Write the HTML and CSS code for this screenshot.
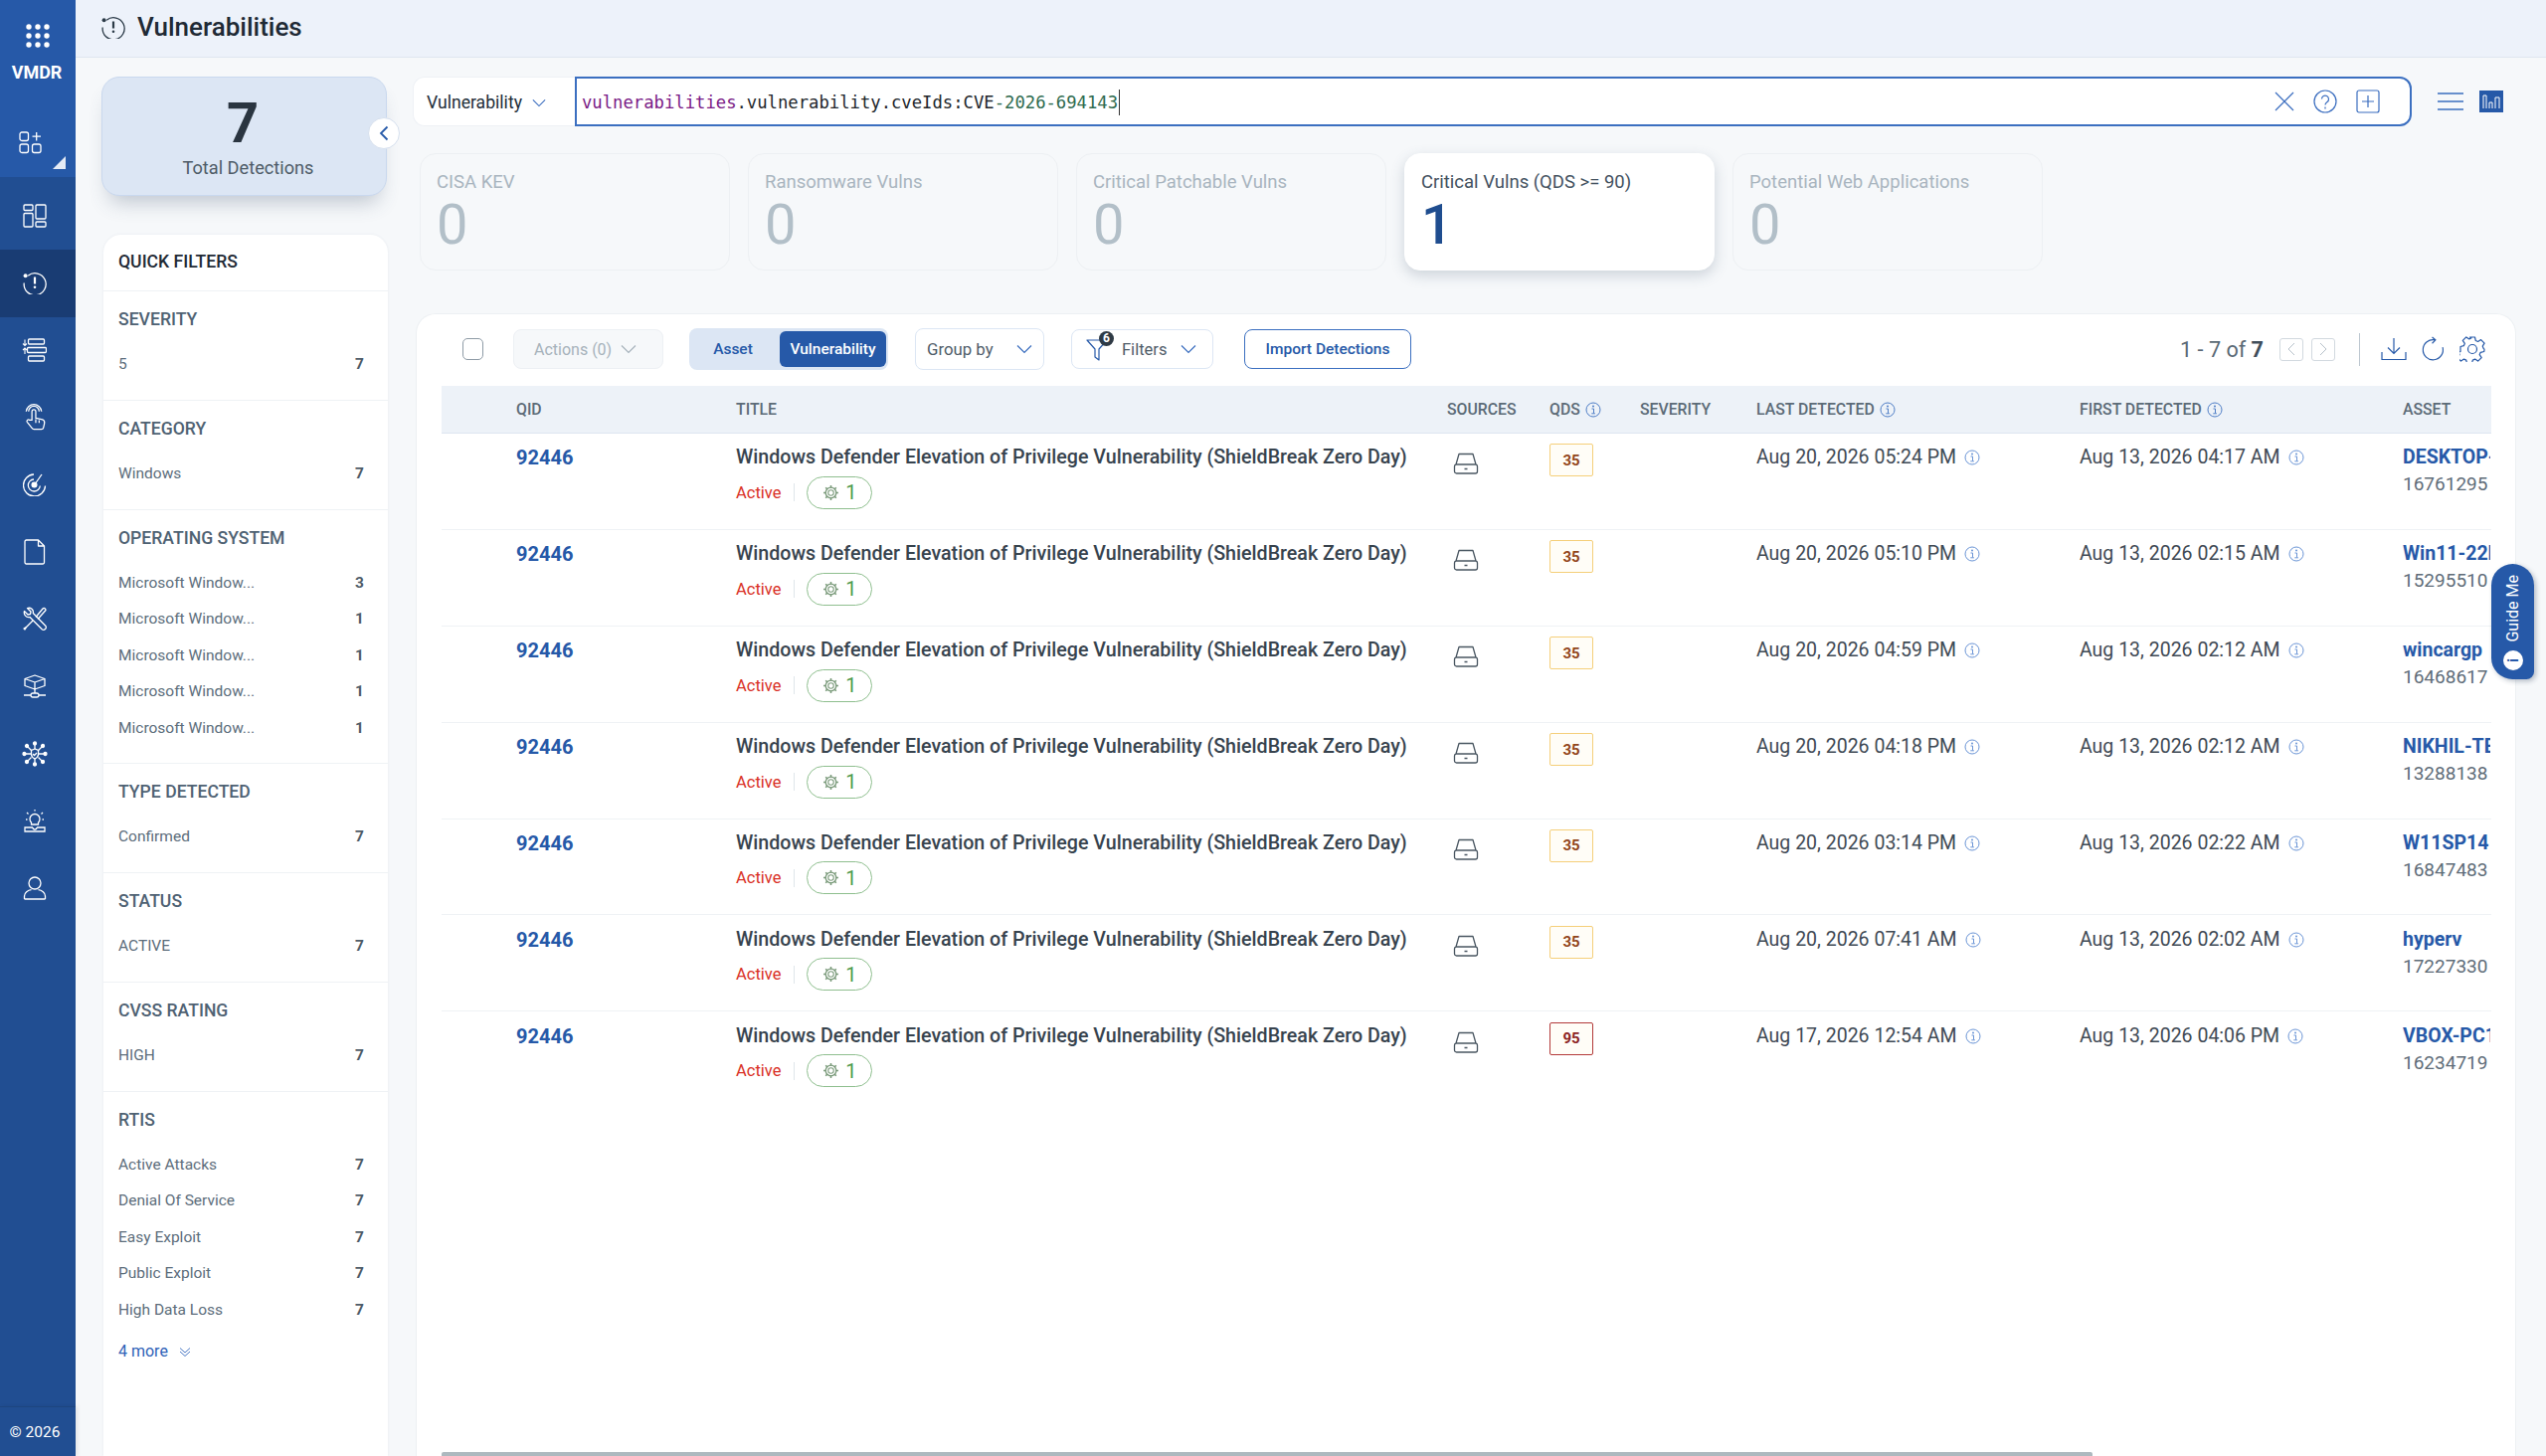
FILE: index.html
```html
<!DOCTYPE html>
<html lang="en">
<head>
<meta charset="utf-8">
<title>Vulnerabilities</title>
<link rel="stylesheet" href="styles.css">
</head>
<body>
<svg class="defs" width="0" height="0" aria-hidden="true">
  <symbol id="i-vuln" viewBox="0 0 24 24"><path d="M5.2 5.2A11 11 0 1 1 1.2 12.500" fill="none" stroke="currentColor" stroke-width="1.300"/><circle cx="2.600" cy="5.200" r="2" fill="currentColor"/><path d="M12 6.500v7" stroke="currentColor" stroke-width="2.200"/><circle cx="12" cy="16.800" r="1.300" fill="currentColor"/></symbol>
  <symbol id="i-info" viewBox="0 0 16 16"><circle cx="8" cy="8" r="7" fill="none" stroke="currentColor"/><circle cx="8" cy="4.600" r="1" fill="currentColor"/><path d="M6.500 7h2v4.500M6.300 11.800h3.600" fill="none" stroke="currentColor"/></symbol>
  <symbol id="i-drive" viewBox="0 0 26 22"><path d="M6 1.500h14l3 10.500H3zM3 12h20a2 2 0 0 1 1.500 2v5a2 2 0 0 1-2 2H3.500a2 2 0 0 1-2-2v-5a2 2 0 0 1 1.500-2z" fill="none" stroke="currentColor" stroke-width="1.300" stroke-linejoin="round"/><path d="M11.500 16.500h3" stroke="currentColor" stroke-width="1.500"/></symbol>
  <symbol id="i-gear" viewBox="0 0 16 16"><circle cx="8" cy="8" r="2.600" fill="none" stroke="currentColor"/><circle cx="8" cy="8" r="5" fill="none" stroke="currentColor" stroke-width="1.200"/><path d="M8 1v2.500M8 12.500V15M1 8h2.500M12.500 8H15M3 3l1.800 1.800M11.200 11.200 13 13M3 13l1.800-1.800M11.200 4.800 13 3" stroke="currentColor" stroke-width="1.400"/></symbol>
  <symbol id="i-chev" viewBox="0 0 16 10"><path d="M1 1.500 8 8.500l7-7" fill="none" stroke="currentColor" stroke-width="1.200"/></symbol>
</svg>

<div class="app">
  <aside class="rail">
    <div class="rail-brand">
      <svg class="rail-dots" viewBox="0 0 24 24" width="24" height="24" fill="#fff"><circle cx="3" cy="3" r="2.700"/><circle cx="12" cy="3" r="2.700"/><circle cx="21" cy="3" r="2.700"/><circle cx="3" cy="12" r="2.700"/><circle cx="12" cy="12" r="2.700"/><circle cx="21" cy="12" r="2.700"/><circle cx="3" cy="21" r="2.700"/><circle cx="12" cy="21" r="2.700"/><circle cx="21" cy="21" r="2.700"/></svg>
      <div class="rail-name">VMDR</div>
    </div>
    <nav class="rail-nav">
      <div class="rail-item rail-first"><svg viewBox="0 0 24 24" width="24" height="24" fill="none" stroke="currentColor" stroke-width="1.300"><rect x="1" y="2" width="8.500" height="8.500" rx="2"/><rect x="1" y="14" width="8.500" height="8.500" rx="2"/><rect x="13.500" y="14" width="8.500" height="8.500" rx="2"/><path d="M17.700 2v8.500M13.500 6.200H22"/></svg></div>
      <div class="rail-item rail-second"><svg viewBox="0 0 24 24" width="24" height="24" fill="none" stroke="currentColor" stroke-width="1.300"><rect x="1" y="1" width="9" height="5.500" rx="1"/><rect x="1" y="9.500" width="9" height="13.500" rx="1"/><rect x="13" y="1" width="10" height="14" rx="1"/><rect x="13" y="18" width="10" height="5" rx="1"/></svg></div>
      <div class="rail-item rail-active"><svg width="24" height="24"><use href="#i-vuln"/></svg></div>
      <div class="rail-item"><svg viewBox="0 0 24 24" width="25" height="24" fill="none" stroke="currentColor" stroke-width="1.300"><rect x="6" y="1" width="16" height="5" rx="1"/><rect x="5" y="9.500" width="19" height="5" rx="1"/><rect x="6" y="18" width="16" height="5" rx="1"/><path d="M2.500 1.500v6M.5 5.500l2 2 2-2M2.500 16v-5.500M.5 12l2-2 2 2" stroke-width="1.100"/></svg></div>
      <div class="rail-item"><svg viewBox="0 0 24 28" width="24" height="27" fill="none" stroke="currentColor" stroke-width="1.300" stroke-linejoin="round"><path d="M9 17V8a2 2 0 0 1 4 0v7l7 1.500c1.500.5 2.500 1.500 2 4l-1 4.500c-.3 1-1 1.500-2 1.500H11c-1 0-1.500-.5-2-1.200L4 19c-1-1.500.8-3.200 2.500-2z"/><path d="M5.500 8a5.500 5.500 0 0 1 11 0M3 8a8 8 0 0 1 8-7.300A8 8 0 0 1 19 8"/><path d="M13 16v4M16.500 17v3"/></svg></div>
      <div class="rail-item"><svg viewBox="0 0 24 24" width="24" height="24" fill="none" stroke="currentColor" stroke-width="1.300"><path d="M11 2a11 11 0 1 0 11.500 11.500"/><path d="M11 7a6 6 0 1 0 6.300 6.500"/><circle cx="11.500" cy="12.500" r="2.400" fill="currentColor"/><path d="M12 12 19 2"/></svg></div>
      <div class="rail-item"><svg viewBox="0 0 22 26" width="22" height="26" fill="none" stroke="currentColor" stroke-width="1.300" stroke-linejoin="round"><path d="M2.500 1h12l6 6v16.500a1.500 1.500 0 0 1-1.500 1.500H2.500A1.500 1.500 0 0 1 1 23.500v-21A1.500 1.500 0 0 1 2.500 1zM14.500 1v6h6"/></svg></div>
      <div class="rail-item"><svg viewBox="0 0 24 24" width="24" height="24" fill="none" stroke="currentColor" stroke-width="1.300" stroke-linejoin="round"><path d="M1.500 4.500 5 8l2.500-.5L8 5 4.500 1.500C8 .5 11 3 10.300 6.500L23 19.500c.5 1 .5 2-.5 3s-2 1-3 .5L7 10.500C3.500 11.500.5 8 1.500 4.500z"/><path d="M13 10.500 20 2c1-1 3-.5 3 1.500L15 12.500M10 14l-6 6-2 3-1-1 3-2"/></svg></div>
      <div class="rail-item"><svg viewBox="0 0 24 24" width="24" height="24" fill="none" stroke="currentColor" stroke-width="1.300" stroke-linejoin="round"><path d="M12 1 22 4.500v7L12 15 2 11.500v-7zM2 4.500 12 8l10-3.500M12 8v7"/><path d="M12 15v4M1 21h7M16 21h7"/><rect x="8" y="19" width="8" height="4" rx="2"/></svg></div>
      <div class="rail-item"><svg viewBox="0 0 26 26" width="26" height="26" fill="none" stroke="currentColor" stroke-width="1.300"><path d="M13 8 9.500 9.500v4c0 2 1.500 3.500 3.500 4.500 2-1 3.500-2.500 3.500-4.500v-4z"/><path d="m11 13 1.500 1.500 2.500-2.500"/><path d="M13 3v5M13 18v5M3 13h6M17 13h6M5.500 5.500 9.500 9.500M16.500 16.500l4 4M5.500 20.500l4-4M16.500 9.500l4-4"/><g fill="currentColor"><circle cx="13" cy="2.500" r="1.500"/><circle cx="13" cy="23.500" r="1.500"/><circle cx="2.500" cy="13" r="1.500"/><circle cx="23.500" cy="13" r="1.500"/><circle cx="5" cy="5" r="1.500"/><circle cx="21" cy="21" r="1.500"/><circle cx="5" cy="21" r="1.500"/><circle cx="21" cy="5" r="1.500"/></g></svg></div>
      <div class="rail-item"><svg viewBox="0 0 24 24" width="24" height="24" fill="none" stroke="currentColor" stroke-width="1.300"><path d="M8.500 14c-1-1-1.500-2-1.500-3.500a5 5 0 0 1 10 0c0 1.500-.5 2.500-1.500 3.500v2h-7z"/><path d="M12 1v1.500M4 4l1.500 1.500M20 4l-1.500 1.500M3 11h1.500M19.500 11H21"/><path d="M10 19H2v4h20v-4h-8M10 19a2 2 0 0 0 4 0"/></svg></div>
      <div class="rail-item"><svg viewBox="0 0 24 24" width="24" height="24" fill="none" stroke="currentColor" stroke-width="1.300"><circle cx="12" cy="7" r="6"/><path d="M1.500 23v-3c0-3 3.500-6 7-6.300M22.500 23v-3c0-3-3.500-6-7-6.300M1.500 23h21"/></svg></div>
    </nav>
    <div class="rail-foot">© 2026</div>
  </aside>

  <div class="page">
    <header class="topbar">
      <svg class="topbar-icon" width="24" height="24"><use href="#i-vuln"/></svg>
      <h1 class="topbar-title">Vulnerabilities</h1>
    </header>

    <div class="content">
      <aside class="left">
        <div class="total">
          <div class="total-num">7</div>
          <div class="total-label">Total Detections</div>
          <button class="collapse" aria-label="Collapse"><svg viewBox="0 0 10 16" width="10" height="16"><path d="M8.500 1.500 2 8l6.500 6.500" fill="none" stroke="#2659a8" stroke-width="1.800"/></svg></button>
        </div>

        <div class="qf">
          <div class="qf-title">QUICK FILTERS</div>
          <section class="qf-sec">
            <h2 class="qf-head">SEVERITY</h2>
            <div class="qf-row"><span>5</span><b>7</b></div>
          </section>
          <section class="qf-sec">
            <h2 class="qf-head">CATEGORY</h2>
            <div class="qf-row"><span>Windows</span><b>7</b></div>
          </section>
          <section class="qf-sec">
            <h2 class="qf-head">OPERATING SYSTEM</h2>
            <div class="qf-row"><span>Microsoft Window...</span><b>3</b></div>
            <div class="qf-row"><span>Microsoft Window...</span><b>1</b></div>
            <div class="qf-row"><span>Microsoft Window...</span><b>1</b></div>
            <div class="qf-row"><span>Microsoft Window...</span><b>1</b></div>
            <div class="qf-row"><span>Microsoft Window...</span><b>1</b></div>
          </section>
          <section class="qf-sec">
            <h2 class="qf-head">TYPE DETECTED</h2>
            <div class="qf-row"><span>Confirmed</span><b>7</b></div>
          </section>
          <section class="qf-sec">
            <h2 class="qf-head">STATUS</h2>
            <div class="qf-row"><span>ACTIVE</span><b>7</b></div>
          </section>
          <section class="qf-sec">
            <h2 class="qf-head">CVSS RATING</h2>
            <div class="qf-row"><span>HIGH</span><b>7</b></div>
          </section>
          <section class="qf-sec qf-last">
            <h2 class="qf-head">RTIS</h2>
            <div class="qf-row"><span>Active Attacks</span><b>7</b></div>
            <div class="qf-row"><span>Denial Of Service</span><b>7</b></div>
            <div class="qf-row"><span>Easy Exploit</span><b>7</b></div>
            <div class="qf-row"><span>Public Exploit</span><b>7</b></div>
            <div class="qf-row"><span>High Data Loss</span><b>7</b></div>
            <div class="qf-more">4 more <svg viewBox="0 0 12 12" width="12" height="12" fill="none" stroke="#4a78c4"><path d="M1 2.500 6 7l5-4.500M1 6l5 4.500L11 6"/></svg></div>
          </section>
        </div>
      </aside>

      <main class="right">
        <div class="searchrow">
          <div class="scope">Vulnerability <svg class="chev-s" width="14" height="9"><use href="#i-chev"/></svg></div>
          <div class="query">
            <div class="query-text"><span class="q-key">vulnerabilities</span>.vulnerability.cveIds:CVE<span class="q-num">-2026-694143</span><span class="caret"></span></div>
            <div class="query-tools">
              <svg viewBox="0 0 20 20" width="20" height="20" fill="none" stroke="currentColor" stroke-width="1.200"><path d="M1 1l18 18M19 1 1 19"/></svg>
              <svg viewBox="0 0 24 24" width="24" height="24" fill="none" stroke="currentColor" stroke-width="1.200"><circle cx="12" cy="12" r="11"/><path d="M8.500 9.500a3.500 3.500 0 1 1 5.500 3c-1.500 1-2 1.500-2 3M12 17.500v2"/></svg>
              <svg viewBox="0 0 24 24" width="24" height="24" fill="none" stroke="currentColor" stroke-width="1.200"><rect x="1" y="1" width="22" height="22" rx="2"/><path d="M12 6v12M6 12h12"/></svg>
            </div>
          </div>
          <svg class="view-list" viewBox="0 0 26 20" width="26" height="20" stroke="currentColor" stroke-width="1.300"><path d="M0 2h26M0 10h26M0 18h26"/></svg>
          <svg class="view-chart" viewBox="0 0 24 22" width="24" height="22"><rect width="24" height="22" fill="#2659a8"/><path d="M4 18V5h3v13M10 18v-6h3v6M16 18V7h4v11" fill="none" stroke="#fff" stroke-width="1"/></svg>
        </div>

        <div class="kpis">
          <div class="kpi"><div class="kpi-label">CISA KEV</div><div class="kpi-num">0</div></div>
          <div class="kpi"><div class="kpi-label">Ransomware Vulns</div><div class="kpi-num">0</div></div>
          <div class="kpi"><div class="kpi-label">Critical Patchable Vulns</div><div class="kpi-num">0</div></div>
          <div class="kpi kpi-on"><div class="kpi-label">Critical Vulns (QDS &gt;= 90)</div><div class="kpi-num">1</div></div>
          <div class="kpi"><div class="kpi-label">Potential Web Applications</div><div class="kpi-num">0</div></div>
        </div>

        <section class="card">
          <div class="tools">
            <span class="check"></span>
            <button class="btn btn-off">Actions (0) <svg width="16" height="10"><use href="#i-chev"/></svg></button>
            <div class="toggle"><span class="toggle-a">Asset</span><span class="toggle-b">Vulnerability</span></div>
            <button class="btn btn-group">Group by <svg class="blue" width="16" height="10"><use href="#i-chev"/></svg></button>
            <button class="btn btn-filter">
              <span class="funnel"><svg viewBox="0 0 22 24" width="22" height="24" fill="none" stroke="#2659a8" stroke-width="1.200" stroke-linejoin="round"><path d="M1 3h20l-8 9v11l-4-3v-8z"/></svg><i class="funnel-n">6</i></span>
              Filters <svg class="blue" width="16" height="10"><use href="#i-chev"/></svg>
            </button>
            <button class="btn btn-import">Import Detections</button>
            <div class="tools-end">
              <span class="pager">1 - 7 of <b>7</b></span>
              <span class="pg"><svg viewBox="0 0 8 14" width="8" height="14" fill="none" stroke="currentColor"><path d="M7 1 1 7l6 6"/></svg></span>
              <span class="pg"><svg viewBox="0 0 8 14" width="8" height="14" fill="none" stroke="currentColor"><path d="m1 1 6 6-6 6"/></svg></span>
              <span class="vsep"></span>
              <svg viewBox="0 0 26 24" width="26" height="24" fill="none" stroke="#2659a8" stroke-width="1.200"><path d="M13 1v15M7 10.500l6 6 6-6M1 15v7.500h24V15"/></svg>
              <svg viewBox="0 0 24 26" width="23" height="26" fill="none" stroke="#2659a8" stroke-width="1.200"><path d="M14 3.500a10.500 10.500 0 1 0 8 7.500M11 .5l3.500 3L11 7"/></svg>
              <svg viewBox="0 0 26 26" width="26" height="26" fill="none" stroke="#2659a8" stroke-width="1.200" stroke-linejoin="round"><circle cx="13" cy="13" r="4.500"/><path d="M10.500 1h5l.8 3.500 2.300 1 3-1.900 3.500 3.500-1.900 3 1 2.300L25 13.200v0l-.2 2.300-3.600.8-1 2.300 2 3-3.600 3.500-3-2-2.300 1-.8 3.400h-5l-.7-3.400-2.300-1-3 2-3.500-3.500 2-3-1-2.300L1 15.500v-5l3.300-.8 1-2.300-2-3 3.500-3.500 3 2 2-.9z"/></svg>
            </div>
          </div>

          <div class="table">
            <div class="grid thead">
              <span></span><span>QID</span><span>TITLE</span><span>SOURCES</span>
              <span>QDS <svg class="info-h" width="16" height="16"><use href="#i-info"/></svg></span>
              <span>SEVERITY</span>
              <span>LAST DETECTED <svg class="info-h" width="16" height="16"><use href="#i-info"/></svg></span>
              <span>FIRST DETECTED <svg class="info-h" width="16" height="16"><use href="#i-info"/></svg></span>
              <span>ASSET</span>
            </div>

            <div class="grid row">
              <span></span><a class="qid">92446</a>
              <div><div class="title">Windows Defender Elevation of Privilege Vulnerability (ShieldBreak Zero Day)</div><div class="meta"><span class="active">Active</span><span class="msep"></span><span class="pill"><svg width="17" height="17"><use href="#i-gear"/></svg>1</span></div></div>
              <svg class="drive" width="26" height="22"><use href="#i-drive"/></svg>
              <span class="qds">35</span><span></span>
              <span class="date">Aug 20, 2026 05:24 PM <svg class="info" width="16" height="16"><use href="#i-info"/></svg></span>
              <span class="date">Aug 13, 2026 04:17 AM <svg class="info" width="16" height="16"><use href="#i-info"/></svg></span>
              <div class="asset"><a>DESKTOP-4</a><span>16761295</span></div>
            </div>
            <div class="grid row">
              <span></span><a class="qid">92446</a>
              <div><div class="title">Windows Defender Elevation of Privilege Vulnerability (ShieldBreak Zero Day)</div><div class="meta"><span class="active">Active</span><span class="msep"></span><span class="pill"><svg width="17" height="17"><use href="#i-gear"/></svg>1</span></div></div>
              <svg class="drive" width="26" height="22"><use href="#i-drive"/></svg>
              <span class="qds">35</span><span></span>
              <span class="date">Aug 20, 2026 05:10 PM <svg class="info" width="16" height="16"><use href="#i-info"/></svg></span>
              <span class="date">Aug 13, 2026 02:15 AM <svg class="info" width="16" height="16"><use href="#i-info"/></svg></span>
              <div class="asset"><a>Win11-22H2</a><span>15295510</span></div>
            </div>
            <div class="grid row">
              <span></span><a class="qid">92446</a>
              <div><div class="title">Windows Defender Elevation of Privilege Vulnerability (ShieldBreak Zero Day)</div><div class="meta"><span class="active">Active</span><span class="msep"></span><span class="pill"><svg width="17" height="17"><use href="#i-gear"/></svg>1</span></div></div>
              <svg class="drive" width="26" height="22"><use href="#i-drive"/></svg>
              <span class="qds">35</span><span></span>
              <span class="date">Aug 20, 2026 04:59 PM <svg class="info" width="16" height="16"><use href="#i-info"/></svg></span>
              <span class="date">Aug 13, 2026 02:12 AM <svg class="info" width="16" height="16"><use href="#i-info"/></svg></span>
              <div class="asset"><a>wincargp</a><span>16468617</span></div>
            </div>
            <div class="grid row">
              <span></span><a class="qid">92446</a>
              <div><div class="title">Windows Defender Elevation of Privilege Vulnerability (ShieldBreak Zero Day)</div><div class="meta"><span class="active">Active</span><span class="msep"></span><span class="pill"><svg width="17" height="17"><use href="#i-gear"/></svg>1</span></div></div>
              <svg class="drive" width="26" height="22"><use href="#i-drive"/></svg>
              <span class="qds">35</span><span></span>
              <span class="date">Aug 20, 2026 04:18 PM <svg class="info" width="16" height="16"><use href="#i-info"/></svg></span>
              <span class="date">Aug 13, 2026 02:12 AM <svg class="info" width="16" height="16"><use href="#i-info"/></svg></span>
              <div class="asset"><a>NIKHIL-TE</a><span>13288138</span></div>
            </div>
            <div class="grid row">
              <span></span><a class="qid">92446</a>
              <div><div class="title">Windows Defender Elevation of Privilege Vulnerability (ShieldBreak Zero Day)</div><div class="meta"><span class="active">Active</span><span class="msep"></span><span class="pill"><svg width="17" height="17"><use href="#i-gear"/></svg>1</span></div></div>
              <svg class="drive" width="26" height="22"><use href="#i-drive"/></svg>
              <span class="qds">35</span><span></span>
              <span class="date">Aug 20, 2026 03:14 PM <svg class="info" width="16" height="16"><use href="#i-info"/></svg></span>
              <span class="date">Aug 13, 2026 02:22 AM <svg class="info" width="16" height="16"><use href="#i-info"/></svg></span>
              <div class="asset"><a>W11SP14</a><span>16847483</span></div>
            </div>
            <div class="grid row">
              <span></span><a class="qid">92446</a>
              <div><div class="title">Windows Defender Elevation of Privilege Vulnerability (ShieldBreak Zero Day)</div><div class="meta"><span class="active">Active</span><span class="msep"></span><span class="pill"><svg width="17" height="17"><use href="#i-gear"/></svg>1</span></div></div>
              <svg class="drive" width="26" height="22"><use href="#i-drive"/></svg>
              <span class="qds">35</span><span></span>
              <span class="date">Aug 20, 2026 07:41 AM <svg class="info" width="16" height="16"><use href="#i-info"/></svg></span>
              <span class="date">Aug 13, 2026 02:02 AM <svg class="info" width="16" height="16"><use href="#i-info"/></svg></span>
              <div class="asset"><a>hyperv</a><span>17227330</span></div>
            </div>
            <div class="grid row row-end">
              <span></span><a class="qid">92446</a>
              <div><div class="title">Windows Defender Elevation of Privilege Vulnerability (ShieldBreak Zero Day)</div><div class="meta"><span class="active">Active</span><span class="msep"></span><span class="pill"><svg width="17" height="17"><use href="#i-gear"/></svg>1</span></div></div>
              <svg class="drive" width="26" height="22"><use href="#i-drive"/></svg>
              <span class="qds qds-high">95</span><span></span>
              <span class="date">Aug 17, 2026 12:54 AM <svg class="info" width="16" height="16"><use href="#i-info"/></svg></span>
              <span class="date">Aug 13, 2026 04:06 PM <svg class="info" width="16" height="16"><use href="#i-info"/></svg></span>
              <div class="asset"><a>VBOX-PC1</a><span>16234719</span></div>
            </div>
          </div>
          <div class="hscroll"></div>
        </section>
      </main>
    </div>
  </div>

  <div class="guide"><span class="guide-text">Guide Me</span><span class="guide-i">i</span></div>
</div>
</body>
</html>
```

FILE: styles.css
```css
* { box-sizing: border-box; }
html, body { margin: 0; height: 100%; }
body { font-family: Roboto, "Liberation Sans", sans-serif; color: #2f3b47; background: #f6f8fa; overflow: hidden; }
.defs { position: absolute; }
button { font: inherit; background: none; padding: 0; }
svg { display: block; flex: none; }

.app { display: flex; height: 1464px; position: relative; overflow: hidden; }

/* Rail */
.rail { width: 76px; flex: none; display: flex; flex-direction: column; background: #214e92; color: #fff; }
.rail-brand { height: 105px; background: #2659a8; display: flex; flex-direction: column; align-items: center; padding: 24px 2px 0 0; }
.rail-dots { margin-left: 2px; }
.rail-name { margin-top: 13px; font-size: 18px; font-weight: 700; line-height: 24px; letter-spacing: -.1px; }
.rail-nav { flex: 1; display: flex; flex-direction: column; }
.rail-item { height: 67.7px; display: flex; align-items: center; justify-content: center; padding: 0 7px 2px 0; }
.rail-first { height: 73px; background: #2659a8; position: relative; padding: 26px 14px 0 0; align-items: flex-start; }
.rail-first::after { content: ""; position: absolute; right: 10px; bottom: 8px; border-style: solid; border-width: 0 0 13px 13px; border-color: transparent transparent #e4ebf6 transparent; }
.rail-second { height: 73px; background: #214e92; padding: 4px 7px 0 0; }
.rail-active { background: #193c73; }
.rail-foot { height: 50px; border-top: 1px solid #1d457f; display: flex; align-items: center; justify-content: center; padding-right: 6px; font-size: 15.500px; line-height: 20px; box-shadow: 2px 0 4px rgba(0,0,0,.08); }

/* Page */
.page { flex: 1; min-width: 0; display: flex; flex-direction: column; }
.topbar { height: 58px; flex: none; background: #edf2fa; border-bottom: 1px solid #dfe6f0; display: flex; align-items: center; padding: 0 0 4px 26px; gap: 12px; }
.topbar-icon { color: #2b3a47; }
.topbar-title { margin: 0; font-size: 26px; font-weight: 500; color: #1f2a35; line-height: 32px; }
.content { flex: 1; min-height: 0; display: flex; }

/* Left */
.left { width: 287px; flex: none; margin-left: 26px; padding-top: 19px; display: flex; flex-direction: column; }
.total { height: 120px; background: #dce6f4; border: 1px solid #c9d8ee; border-radius: 18px; box-shadow: 0 14px 20px -8px rgba(60,80,110,.3); display: flex; flex-direction: column; align-items: center; position: relative; padding-top: 14px; }
.total-num { font-size: 56px; font-weight: 700; line-height: 64px; color: #2a3540; margin-left: -3px; }
.total-label { font-size: 18.200px; line-height: 24px; color: #4e5b67; margin-top: 1px; margin-left: 8px; }
.collapse { position: absolute; right: -14px; top: 40px; width: 32px; height: 32px; border-radius: 50%; background: #fff; border: 1px solid #d6e0ee; display: flex; align-items: center; justify-content: center; }
.qf { margin: 39px -1px 0 2px; flex: 1; background: #fff; border-radius: 18px 18px 0 0; box-shadow: 0 0 3px rgba(60,80,110,.08); }
.qf-title { height: 57px; padding: 15px 15px 0; font-size: 17.600px; font-weight: 500; line-height: 24px; color: #1f2a35; border-bottom: 1px solid #eff2f5; }
.qf-sec { padding: 14px 15px 17.500px; border-bottom: 1px solid #eff2f5; }
.qf-last { border-bottom: 0; }
.qf-head { margin: 0 0 13px; font-size: 17.600px; font-weight: 500; line-height: 28px; color: #4f6273; }
.qf-row { height: 36.400px; display: flex; align-items: center; justify-content: space-between; padding-right: 9px; font-size: 15.500px; color: #5c6d7b; }
.qf-row b { font-weight: 700; color: #4f5c68; }
.qf-more { margin-top: 9px; height: 30px; display: flex; align-items: center; gap: 11px; font-size: 16px; color: #2f63b8; }

/* Right */
.right { flex: 1; min-width: 0; margin-left: 26px; padding-top: 19px; display: flex; flex-direction: column; }
.searchrow { display: flex; align-items: center; height: 50px; flex: none; }
.scope { width: 163px; height: 50px; background: #fff; border-radius: 12px 0 0 12px; border: 1px solid #eef1f5; border-right: 0; display: flex; align-items: center; gap: 10px; padding: 2px 0 0 13px; font-size: 17.600px; color: #222d38; }
.chev-s { color: #3a6dbf; }
.query { width: 1847px; height: 50px; background: #fff; border: 2px solid #3b6fc0; border-radius: 0 12px 12px 0; display: flex; align-items: center; justify-content: space-between; padding: 0 30px 0 5px; }
.query-text { display: flex; align-items: center; padding-top: 2px; font-family: "DejaVu Sans Mono", "Liberation Mono", monospace; font-size: 17.230px; color: #22262b; white-space: pre; }
.q-key { color: #7a1a86; }
.q-num { color: #2f6b4f; }
.caret { display: inline-block; width: 1px; height: 26px; background: #333; margin-left: 1px; }
.query-tools { display: flex; align-items: center; gap: 19px; color: #3a6dbf; }
.view-list { margin-left: 26px; color: #3a6dbf; }
.view-chart { margin-left: 16px; }

.kpis { display: flex; gap: 18px; margin: 27px 0 0 7px; flex: none; }
.kpi { width: 312px; height: 118px; border: 1px solid #edf0f3; border-radius: 16px; padding: 16px 16px 0; }
.kpi-label { font-size: 18.500px; line-height: 24px; color: #a9b5bf; }
.kpi-num { font-size: 56px; line-height: 60px; color: #b2bfc8; margin-top: 1px; }
.kpi-on { background: #fff; border-color: #fff; box-shadow: 0 5px 14px rgba(60,80,110,.22); }
.kpi-on .kpi-label { color: #44525f; }
.kpi-on .kpi-num { color: #1f4d8f; font-weight: 500; }

/* Card */
.card { flex: 1; min-height: 0; margin: 43px 30px 0 3px; background: #fff; border: 1px solid #edf0f3; border-bottom: 0; border-radius: 20px 20px 0 0; padding: 0 24px 0 25px; display: flex; flex-direction: column; position: relative; }
.tools { height: 72px; flex: none; display: flex; align-items: center; padding-bottom: 2px; font-size: 16px; }
.check { width: 21px; height: 22px; border: 1.500px solid #8e9ba6; border-radius: 5px; margin-left: 21px; background: #fff; }
.btn { height: 40px; border-radius: 8px; display: flex; align-items: center; font-size: 15.500px; border: 1px solid #dce6f4; background: #fff; color: #4f5c68; }
.btn-off { width: 151px; margin-left: 30px; background: #f6f8fa; color: #a6b2bb; padding-left: 20px; gap: 9px; border-color: #edf0f4; font-size: 16px; }
.toggle { width: 200px; height: 42px; margin-left: 26px; background: #dce6f4; border-radius: 8px; display: flex; align-items: center; padding: 0 2px 0 3px; font-size: 15.500px; font-weight: 500; }
.toggle-a { width: 88px; padding-right: 6px; text-align: center; color: #2659a8; }
.toggle-b { flex: 1; height: 36px; background: #2659a8; color: #fff; border-radius: 6px; display: flex; align-items: center; justify-content: center; }
.btn-group { width: 130px; height: 42px; margin-left: 27px; padding: 0 11px; justify-content: space-between; font-size: 16.800px; }
.blue { color: #3a6dbf; }
.btn-filter { width: 143px; margin-left: 27px; padding-left: 14px; gap: 14px; font-size: 16.500px; }
.funnel { position: relative; display: block; width: 22px; height: 24px; }
.funnel-n { position: absolute; right: -6px; top: -6px; width: 15px; height: 15px; border-radius: 50%; background: #2e3a45; color: #fff; font-style: normal; font-size: 12px; font-weight: 700; line-height: 15px; text-align: center; }
.btn-import { width: 168px; margin-left: 31px; justify-content: center; color: #2659a8; border-color: #3b6fc0; font-weight: 500; }
.tools-end { margin-left: auto; margin-right: 6px; display: flex; align-items: center; }
.pager { font-size: 21.600px; color: #5a6975; margin-right: 16px; }
.pager b { color: #414e5a; font-weight: 700; }
.pg { width: 24px; height: 23px; border: 1.500px solid #d2d9df; border-radius: 3px; display: flex; align-items: center; justify-content: center; color: #b5c0c9; margin-right: 8px; }
.vsep { width: 1px; height: 33px; background: #bcc7d0; margin: 0 21px 0 16px; }
.tools-end svg + svg { margin-left: 15px; }

.table { flex: none; overflow: hidden; }
.grid { display: grid; grid-template-columns: 75px 221px 715px 103px 91px 117px 325px 325px 88px; white-space: nowrap; }
.thead { height: 48px; background: #edf2f8; border-bottom: 1px solid #dde5f0; align-items: center; font-size: 15.800px; font-weight: 500; color: #5c6b77; }
.thead > span { display: flex; align-items: center; gap: 5px; }
.info-h { color: #4f7ec6; }
.row { height: 96.900px; border-bottom: 1px solid #eff2f5; align-items: start; padding-top: 11.400px; font-size: 19.500px; }
.row-end { border-bottom: 0; }
.qid { font-size: 20px; font-weight: 700; line-height: 26px; color: #2659a8; }
.title { font-size: 19.650px; font-weight: 500; line-height: 26px; color: #37434e; }
.meta { display: flex; align-items: center; height: 34px; margin-top: 5px; }
.active { font-size: 16.500px; color: #d93025; }
.msep { width: 1px; height: 18px; background: #dfe5ea; margin: 0 12px 0 13px; }
.pill { width: 66px; height: 33px; border: 1px solid #8fbf8f; border-radius: 17px; display: flex; align-items: center; justify-content: center; gap: 6px; font-size: 20px; color: #4f9a4f; }
.pill svg { color: #7a9a7a; }
.drive { color: #4a5762; margin: 8px 0 0 6px; }
.qds { width: 44px; height: 33px; margin-top: -1px; background: #fffdf7; border: 1px solid #f5cf7a; border-radius: 2px; display: flex; align-items: center; justify-content: center; font-size: 15px; font-weight: 700; color: #92451a; }
.qds-high { border-color: #b33a3a; color: #8c2323; }
.date { display: flex; align-items: center; gap: 8px; line-height: 26px; color: #3f4a55; }
.info { color: #6b95d6; }
.asset { display: flex; flex-direction: column; overflow: hidden; }
.asset a { font-size: 19.500px; font-weight: 700; line-height: 26px; color: #2659a8; }
.asset span { font-size: 19px; line-height: 28px; color: #5f6d79; }

.hscroll { position: absolute; left: 25px; bottom: 0; width: 1660px; height: 4px; background: #adb9bf; border-radius: 2px 2px 0 0; }

.guide { position: absolute; left: 2505px; top: 567px; width: 43px; height: 116px; background: #2659a8; border-radius: 22px 22px 8px 22px; box-shadow: 2px 2px 5px rgba(30,50,80,.3); display: flex; flex-direction: column; align-items: center; padding-top: 11px; color: #fff; }
.guide-text { writing-mode: vertical-rl; transform: rotate(180deg); font-size: 16px; line-height: 20px; }
.guide-i { margin-top: 8px; width: 20px; height: 20px; border-radius: 50%; background: #fff; color: #2659a8; font-size: 14px; font-weight: 700; line-height: 20px; text-align: center; transform: rotate(-90deg); }
```
